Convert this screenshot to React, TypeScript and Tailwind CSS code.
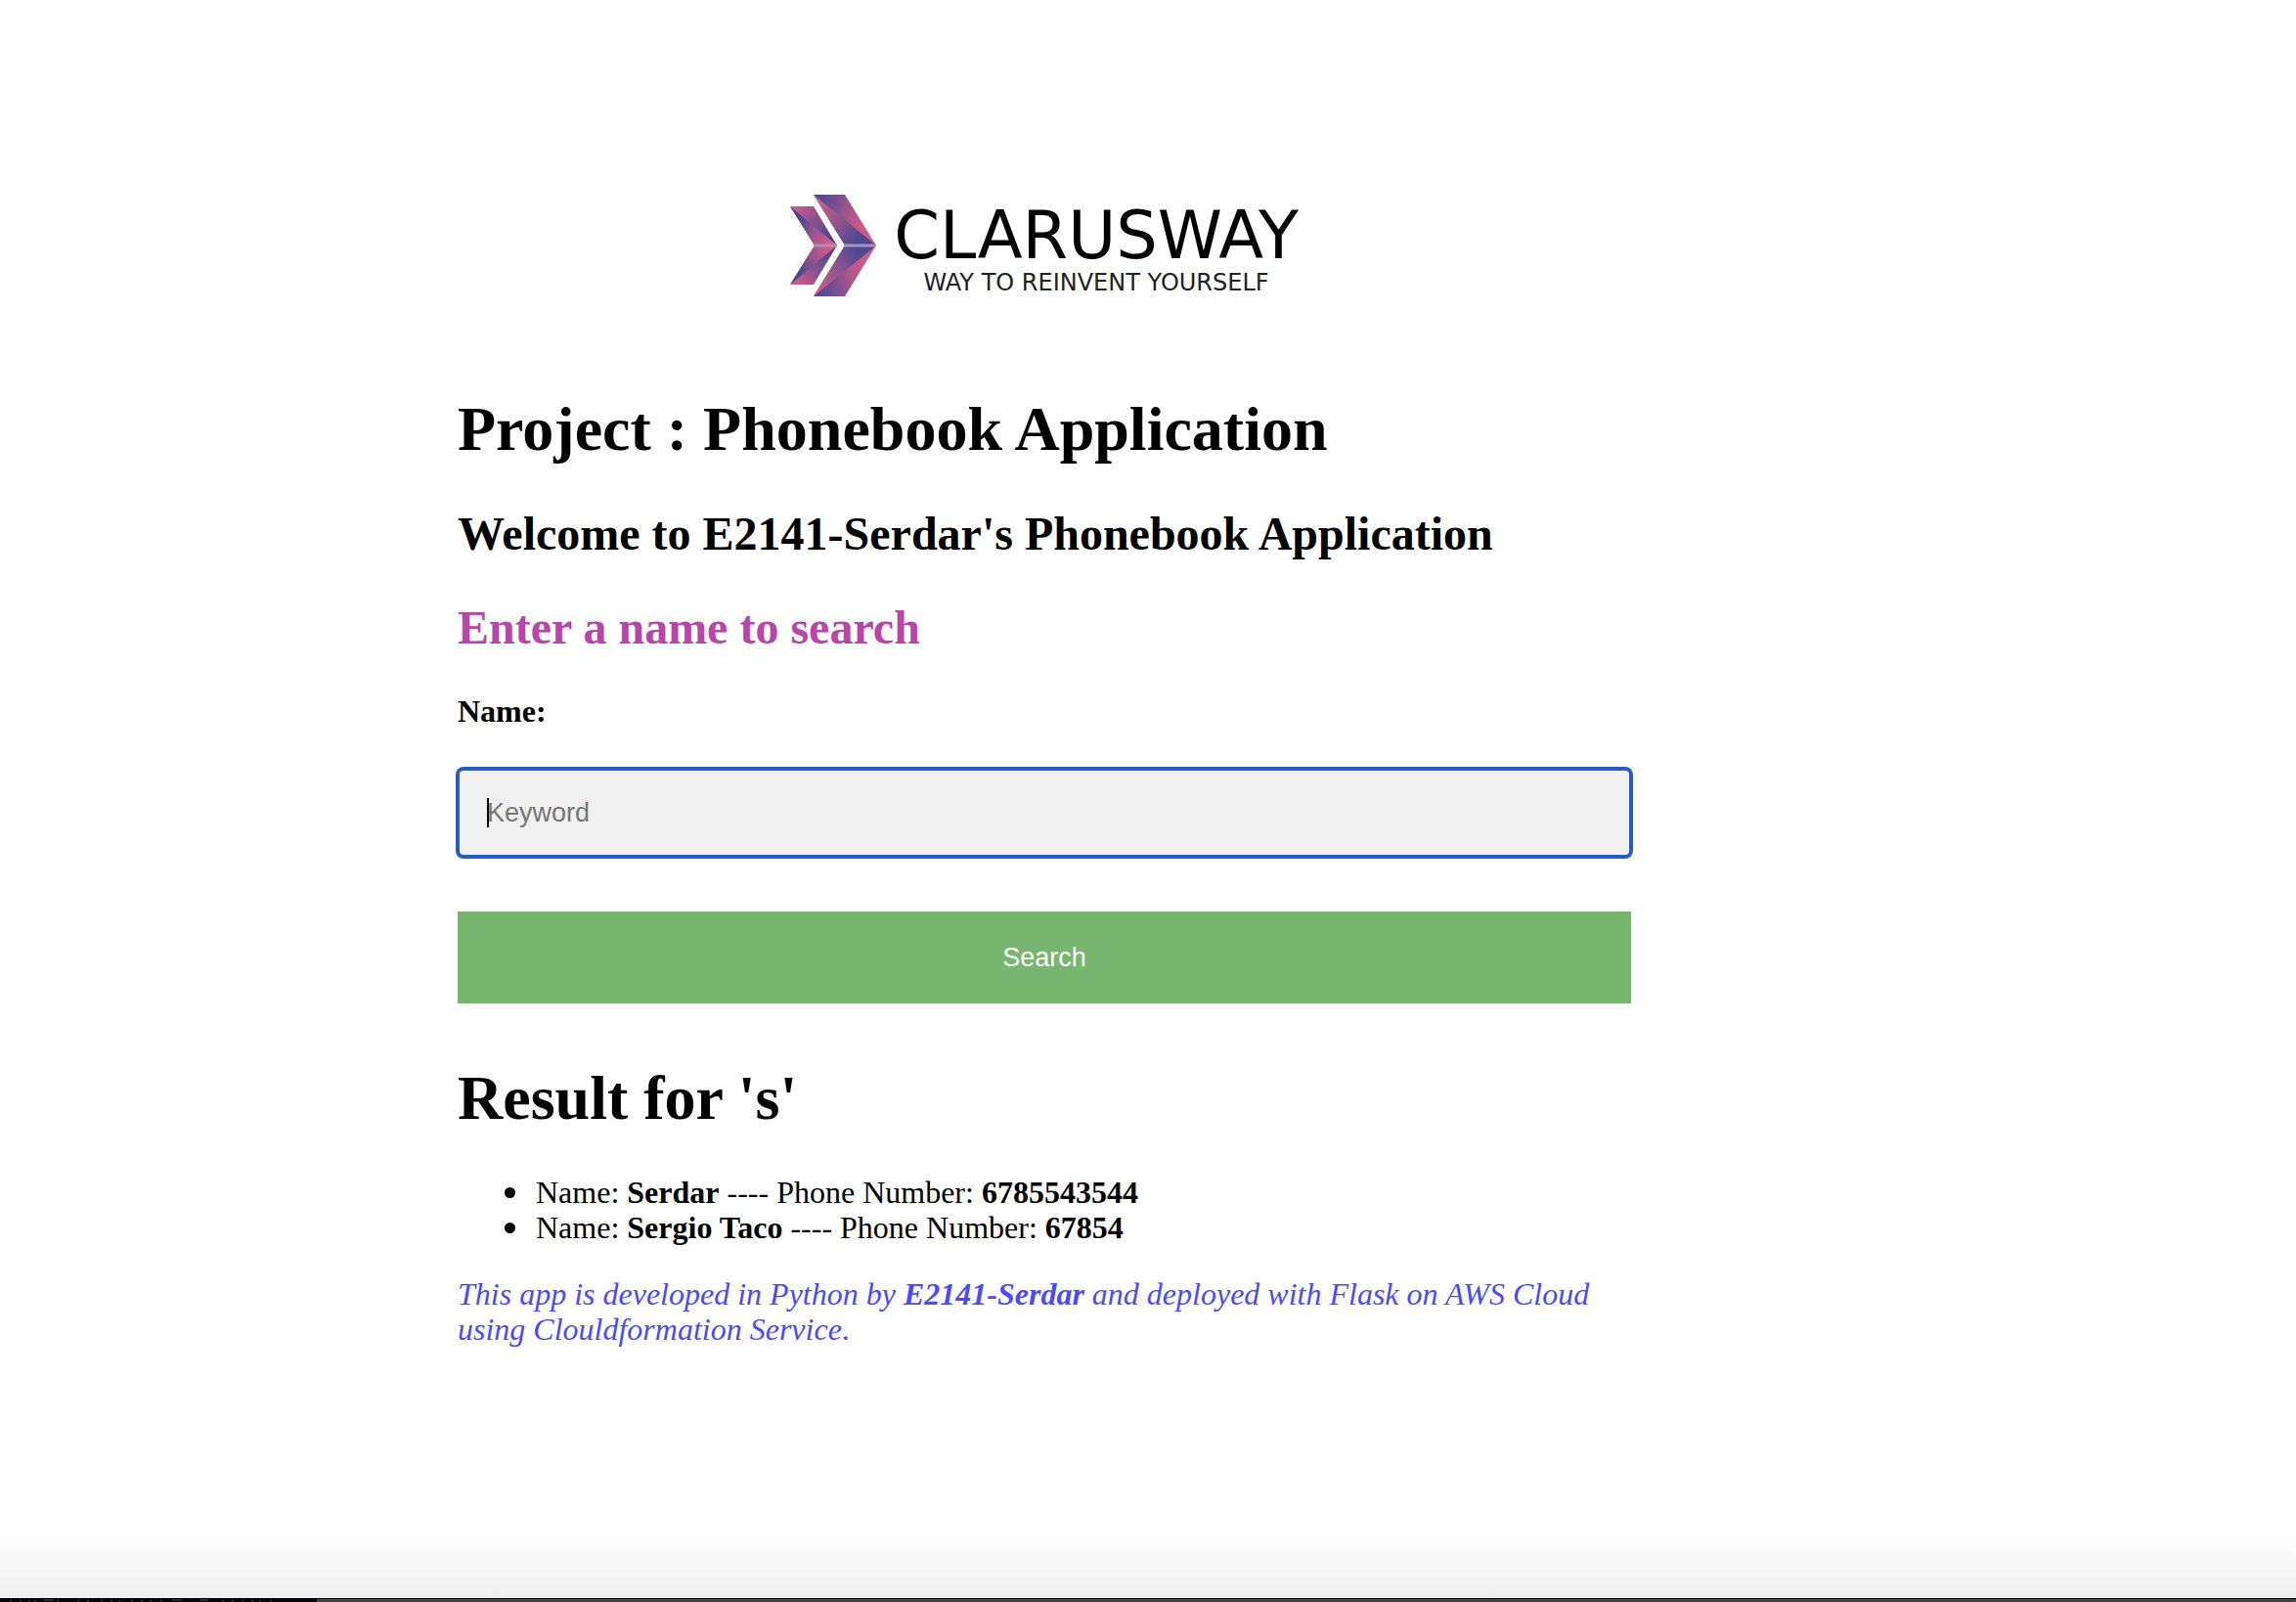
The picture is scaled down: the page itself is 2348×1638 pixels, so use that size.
const contacts = [
  { name: "Serdar", phone: "6785543544" },
  { name: "Sergio Taco", phone: "67854" },
];

function LogoMark() {
  return (
    <svg width="88" height="104" viewBox="0 0 88 104" aria-hidden="true">
      <defs>
        <linearGradient id="frontOuter" gradientUnits="userSpaceOnUse" x1="28" y1="0" x2="78" y2="14">
          <stop offset="0" stopColor="#4a4894" />
          <stop offset="0.45" stopColor="#80508f" />
          <stop offset="0.8" stopColor="#b95789" />
          <stop offset="1" stopColor="#c95a86" />
        </linearGradient>
        <linearGradient id="frontInner" gradientUnits="userSpaceOnUse" x1="26" y1="4" x2="80" y2="48">
          <stop offset="0" stopColor="#d65c84" />
          <stop offset="0.35" stopColor="#a2568b" />
          <stop offset="0.6" stopColor="#7d5090" />
          <stop offset="0.85" stopColor="#4c4894" />
        </linearGradient>
        <linearGradient id="backOuter" gradientUnits="userSpaceOnUse" x1="2" y1="12" x2="44" y2="44">
          <stop offset="0" stopColor="#d95c84" />
          <stop offset="0.5" stopColor="#8c528e" />
          <stop offset="1" stopColor="#464794" />
        </linearGradient>
        <linearGradient id="backInner" gradientUnits="userSpaceOnUse" x1="8" y1="26" x2="44" y2="46">
          <stop offset="0" stopColor="#464794" />
          <stop offset="0.5" stopColor="#9a548c" />
          <stop offset="1" stopColor="#da5c84" />
        </linearGradient>
        <g id="half">
          <path d="M24 0H56L88 52H56Z" fill="url(#frontOuter)" />
          <path d="M24 0L88 52H56Z" fill="url(#frontInner)" />
          <path d="M0 12H24L48 52H25Z" fill="url(#backOuter)" />
          <path d="M0 12L48 52H25Z" fill="url(#backInner)" />
        </g>
      </defs>
      <use href="#half" />
      <use href="#half" transform="matrix(1 0 0 -1 0 104)" />
      <path d="M24 52H48M55 52H88" stroke="#b08fbd" strokeWidth="3" />
    </svg>
  );
}

function Logo() {
  return (
    <div className="flex justify-center gap-[18px]">
      <LogoMark />
      <div className="flex flex-col items-center pt-2 font-['DejaVu_Sans',sans-serif] text-black">
        <span className="text-[67px] leading-[68px]">CLARUSWAY</span>
        <span className="text-2xl leading-7 text-[#222]">WAY TO REINVENT YOURSELF</span>
      </div>
    </div>
  );
}

export default function App() {
  return (
    <div className="flex min-h-screen flex-col bg-white font-['Liberation_Serif',serif] text-[32px] leading-9 text-black">
      <main className="w-full max-w-[1668px] flex-1 pt-[199px] pl-[468px]">
        <Logo />
        <h1 className="mt-[100px] text-[64px] leading-[72px] font-bold">Project : Phonebook Application</h1>
        <h2 className="mt-[43px] text-5xl leading-14 font-bold">Welcome to E2141-Serdar's Phonebook Application</h2>
        <h2 className="mt-10 text-5xl leading-14 font-bold text-[#b745aa]">Enter a name to search</h2>
        <form className="mt-[39px]" onSubmit={(e) => e.preventDefault()}>
          <label htmlFor="keyword" className="block font-bold">
            Name:
          </label>
          <div className="relative -mx-0.5 mt-[39px]">
            <input
              id="keyword"
              type="text"
              placeholder="Keyword"
              className="block h-[94px] w-full rounded-lg border-4 border-[#255cc7] bg-[#f0f0f0] px-7 font-['Liberation_Sans',sans-serif] text-[27px] outline-none placeholder:text-[#757575]"
            />
            <span className="absolute top-8 left-8 h-[30px] w-0.5 bg-black" />
          </div>
          <button
            type="submit"
            className="mt-[54px] block h-[94px] w-full bg-[#77b66e] font-['Liberation_Sans',sans-serif] text-[27px] text-white"
          >
            Search
          </button>
        </form>
        <h1 className="mt-[61px] text-[64px] leading-[72px] font-bold">Result for 's'</h1>
        <ul className="mt-[42px] pl-12">
          {contacts.map((c) => (
            <li key={c.name} className="flex items-center gap-[21px]">
              <span className="size-[11px] rounded-full bg-black" />
              <span>
                Name: <b>{c.name}</b> ---- Phone Number: <b>{c.phone}</b>
              </span>
            </li>
          ))}
        </ul>
        <p className="mt-8 text-[#4b4bf5] italic">
          This app is developed in Python by <b>E2141-Serdar</b> and deployed with Flask on AWS Cloud using
          Clouldformation Service<span className="not-italic">.</span>
        </p>
      </main>
      <footer>
        <div className="h-16 bg-linear-to-b from-white to-[#eeeeee]" />
        <div className="h-1 border-t border-black bg-[#434243]">
          <div className="h-full w-[324px] bg-[#050305]">
            <svg width="280" height="3" viewBox="0 0 280 3" className="block" aria-hidden="true">
              <path
                d="M11 1V3M21 1V3M30 1V3M36 1V3M45 1H55M59 1V3M80 1V3M90 1V3M104 1V3M114 1V3M122 1V3M135 1V3M145 1V3M154 1V3M165 1V3M176 1H186M204 1H213M228 1V3M238 1V3M248 1V3M258 1V3M266 1V3M277 1V3"
                stroke="#2b292b"
                strokeWidth="2"
              />
            </svg>
          </div>
        </div>
      </footer>
    </div>
  );
}
